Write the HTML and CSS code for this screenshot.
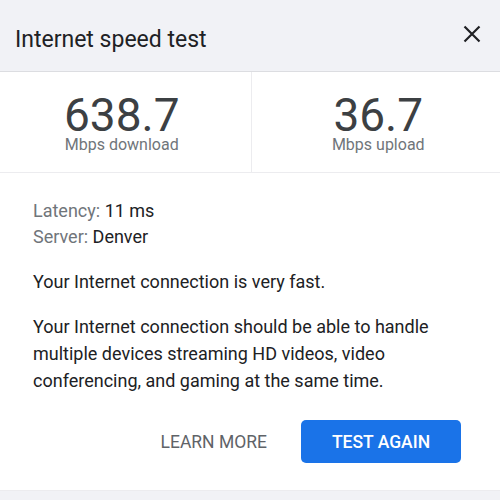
FILE: index.html
```html
<!DOCTYPE html>
<html lang="en">
<head>
    <meta charset="UTF-8">
    <meta name="viewport" content="width=device-width, initial-scale=1.0">
    <title>Internet speed test</title>
    <link rel="stylesheet" href="styles.css">
</head>
<body>
    <div class="dialog">
        <header class="header">
            <h1 class="title">Internet speed test</h1>
            <button class="close" aria-label="Close">
                <svg width="18" height="18" viewBox="0 0 18 18">
                    <path d="M1.5 1.5 L16.5 16.5 M16.5 1.5 L1.5 16.5" stroke="#202124" stroke-width="2.2" fill="none"/>
                </svg>
            </button>
        </header>

        <div class="stats">
            <div class="stat stat-down">
                <div class="value">638.7</div>
                <div class="unit">Mbps download</div>
            </div>
            <div class="stat stat-up">
                <div class="value">36.7</div>
                <div class="unit">Mbps upload</div>
            </div>
        </div>

        <div class="info">
            <div class="meta">
                <div><span class="label">Latency:</span> 11 ms</div>
                <div><span class="label">Server:</span> Denver</div>
            </div>
            <p class="verdict">Your Internet connection is very fast.</p>
            <p class="desc">Your Internet connection should be able to handle multiple devices streaming HD videos, video conferencing, and gaming at the same time.</p>
        </div>

        <div class="actions">
            <button class="btn-text">LEARN MORE</button>
            <button class="btn-primary">TEST AGAIN</button>
        </div>

        <div class="footer"></div>
    </div>
</body>
</html>
```

FILE: styles.css
```css
body {
    margin: 0;
    padding: 0;
    font-family: Roboto, 'Liberation Sans', sans-serif;
    color: #202124;
    background-color: #ffffff;
}
.header {
    display: flex;
    justify-content: space-between;
    align-items: center;
    height: 71px;
    padding: 0 19px 0 15px;
    background-color: #f1f2f6;
    border-bottom: 1px solid #dcdde1;
}
.title {
    margin: 8px 0 0 0;
    font-size: 23px;
    font-weight: 400;
    line-height: 28px;
}
.close {
    display: flex;
    margin-top: -3px;
    padding: 0;
    border: none;
    background: none;
    cursor: pointer;
}
.stats {
    display: flex;
    height: 100px;
    border-bottom: 1px solid #ececef;
}
.stat {
    flex: 1;
    text-align: center;
    box-sizing: border-box;
}
.stat-down {
    padding-right: 7px;
    border-right: 1px solid #ececef;
}
.stat-up {
    padding-left: 5px;
}
.value {
    margin-top: 23px;
    font-size: 46px;
    line-height: 40px;
    color: #3c4043;
}
.unit {
    margin-top: 1px;
    font-size: 16px;
    line-height: 18px;
    color: #70757a;
}
.info {
    padding: 25px 33px 0 33px;
    font-size: 18px;
}
.meta {
    line-height: 26px;
}
.label {
    color: #70757a;
}
.verdict {
    margin: 18px 0 0 0;
    line-height: 27px;
}
.desc {
    margin: 18px 0 0 0;
    line-height: 27px;
}
.actions {
    display: flex;
    justify-content: flex-end;
    align-items: center;
    gap: 18px;
    padding: 26px 39px 27px 0;
    border-bottom: 1px solid #ececef;
}
.btn-text {
    padding: 0 16px;
    height: 43px;
    border: none;
    background: none;
    font-family: inherit;
    font-size: 17.5px;
    color: #5f6368;
    cursor: pointer;
}
.btn-primary {
    width: 160px;
    height: 43px;
    border: none;
    border-radius: 5px;
    background-color: #1a73e8;
    color: #ffffff;
    font-family: inherit;
    font-size: 17.5px;
    font-weight: 500;
    cursor: pointer;
}
.footer {
    height: 20px;
    background-color: #f1f2f6;
}
```
